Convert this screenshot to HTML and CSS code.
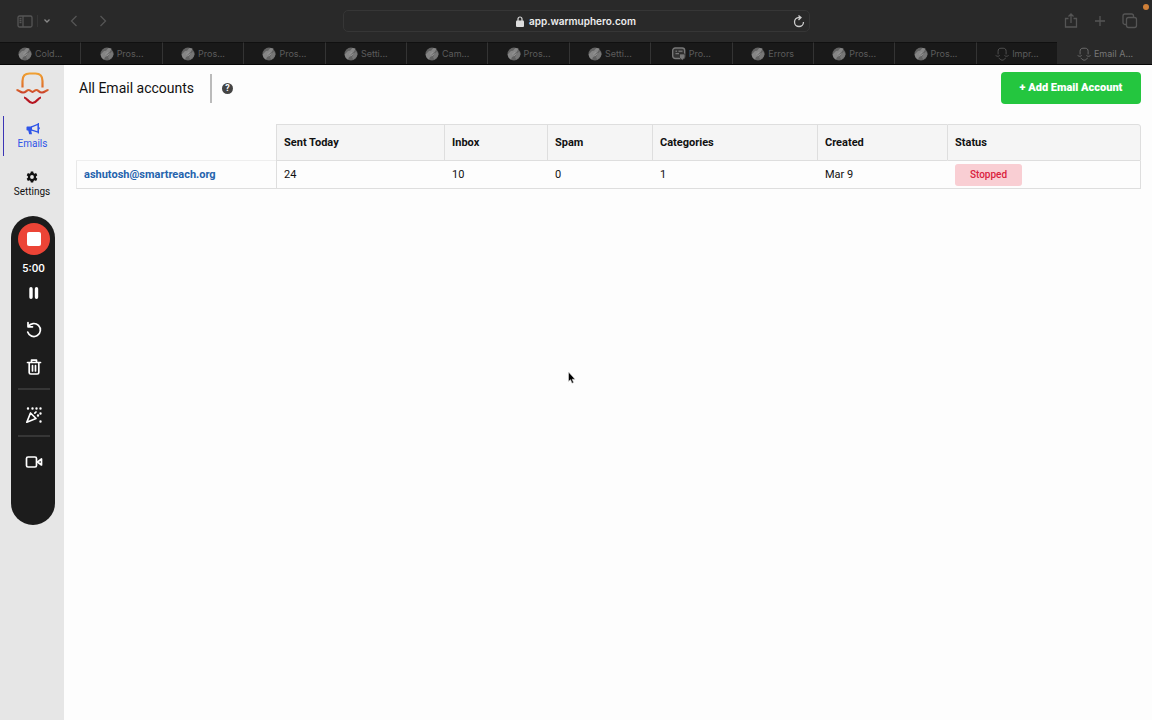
FILE: index.html
```html
<!DOCTYPE html>
<html lang="en">
<head>
<meta charset="utf-8">
<title>Email Accounts</title>
<link rel="stylesheet" href="styles.css">
</head>
<body>
<svg width="0" height="0" class="sprite" aria-hidden="true">
  <symbol id="globe" viewBox="0 0 14 14">
    <circle cx="7" cy="7" r="6.500" fill="#626262"/>
    <path d="M.6 7.500 4 4l2-.3L8.500 1l3 .6L10 4.500 8 7 6.500 9.500 5 10l-1 2.800L1.500 10.500z" fill="#858585"/>
    <path d="M9 7.500l3-3 1.500 2.500-1 3-3 2.500-1.500-2z" fill="#777"/>
    <path d="M5 7.500l3-2.500M7 9l2.500-2.500" stroke="#999" stroke-width=".8"/>
  </symbol>
  <symbol id="hero" viewBox="0 0 34 34">
    <path d="M7.500 18v-7.500c0-5 2.500-7.500 7-7.500h5.500c4.500 0 7 2.500 7 7.500V18M1.500 20.500c3.500 2.500 7 3 10 0M33 20.500c-3.500 2.500-7 3-10 0M9 27c3 1 4 5 8.500 5s5.500-4 8.500-5" fill="none" stroke="currentColor" stroke-width="2"/>
  </symbol>
</svg>

<header class="browser">
  <div class="toolbar">
    <div class="tools">
      <button class="tool" aria-label="Sidebar"><svg width="16" height="13" viewBox="0 0 16 13"><rect x="1" y="1" width="14" height="11" rx="1.500"/><path d="M6 1v11M2.500 3.500h2M2.500 5.500h2M2.500 7.500h2"/></svg></button>
      <span class="tool-line"></span>
      <button class="tool chevron" aria-label="Tab groups"><svg width="8" height="6" viewBox="0 0 8 6"><path d="m1.500 1.500 2.500 2.500 2.500-2.500"/></svg></button>
      <button class="tool back" aria-label="Back"><svg width="8" height="12" viewBox="0 0 8 12"><path d="M6.500 1 1.500 6l5 5"/></svg></button>
      <button class="tool forward" aria-label="Forward"><svg width="8" height="12" viewBox="0 0 8 12"><path d="m1.500 1 5 5-5 5"/></svg></button>
    </div>
    <div class="address">
      <span class="url"><svg width="8" height="11" viewBox="0 0 8 11"><rect y="4.500" width="8" height="6.500" rx="1" fill="#ddd"/><path d="M2 5V3a2 2 0 0 1 4 0v2" fill="none" stroke="#ddd" stroke-width="1.200"/></svg>app.warmuphero.com</span>
      <button class="tool reload" aria-label="Reload"><svg width="12" height="13" viewBox="0 0 12 13"><path d="M6 2.500A4.500 4.500 0 1 0 10.500 7M6 2.500h1.500M5.500.5l2.500 2-2.500 2.500"/></svg></button>
    </div>
    <div class="tools tools-right">
      <button class="tool" aria-label="Share"><svg width="14" height="16" viewBox="0 0 14 16"><path d="M4.500 5.500H1.500v8.500h11V5.500h-3M7 10V1M4.500 3.500 7 1l2.500 2.500"/></svg></button>
      <button class="tool" aria-label="New tab"><svg width="12" height="12" viewBox="0 0 12 12"><path d="M6 1v10M1 6h10"/></svg></button>
      <button class="tool" aria-label="Show tabs"><svg width="16" height="16" viewBox="0 0 16 16"><rect x="4.500" y="4.500" width="10" height="10" rx="2"/><path d="M4.500 11.500H3a2 2 0 0 1-2-2V3a2 2 0 0 1 2-2h6.500a2 2 0 0 1 2 2v1.500"/></svg></button>
    </div>
    <span class="mic-dot"></span>
  </div>
  <nav class="tabs" aria-label="Browser tabs">
    <button class="tab"><svg class="fav"><use href="#globe"/></svg>Cold...</button>
    <button class="tab"><svg class="fav"><use href="#globe"/></svg>Pros...</button>
    <button class="tab"><svg class="fav"><use href="#globe"/></svg>Pros...</button>
    <button class="tab"><svg class="fav"><use href="#globe"/></svg>Pros...</button>
    <button class="tab"><svg class="fav"><use href="#globe"/></svg>Setti...</button>
    <button class="tab"><svg class="fav"><use href="#globe"/></svg>Cam...</button>
    <button class="tab"><svg class="fav"><use href="#globe"/></svg>Pros...</button>
    <button class="tab"><svg class="fav"><use href="#globe"/></svg>Setti...</button>
    <button class="tab"><svg class="fav" viewBox="0 0 14 14"><rect x=".7" y="1" width="12" height="10.500" rx="2.500" fill="#333" stroke="#777" stroke-width="1.400"/><path d="M3.500 4.200h1.500M6.500 4.200h4M3.500 6.700h3.500" stroke="#888"/><path d="M7.500 7h5.500v3.500l-2.700 2.700-2.800-2.700z" fill="#777" stroke="#222" stroke-width=".6"/></svg>Pro...</button>
    <button class="tab"><svg class="fav"><use href="#globe"/></svg>Errors</button>
    <button class="tab"><svg class="fav"><use href="#globe"/></svg>Pros...</button>
    <button class="tab"><svg class="fav"><use href="#globe"/></svg>Pros...</button>
    <button class="tab"><svg class="fav"><use href="#hero"/></svg>Impr...</button>
    <button class="tab active"><svg class="fav"><use href="#hero"/></svg>Email A...</button>
  </nav>
</header>

<div class="app">
  <aside class="sidebar">
    <svg class="logo" viewBox="0 0 34 34" role="img" aria-label="WarmupHero">
      <defs><linearGradient id="flame" gradientUnits="userSpaceOnUse" x1="0" y1="2" x2="0" y2="33"><stop offset="0" stop-color="#f0a132"/><stop offset=".55" stop-color="#d9622b"/><stop offset=".72" stop-color="#b92028"/><stop offset="1" stop-color="#b5121f"/></linearGradient></defs>
      <path d="M7.500 16.500V10c0-5 2.500-7.500 7-7.500H20.500c4.500 0 7 2.500 7 7.500v6.500M1.500 19c2.500 0 3.500 2.500 6.500 2.500s3.500-2.500 5.500-2.500 2.500 1.800 4 1.800 2-1.800 4-1.800 2.500 2.500 5.500 2.500 4-2.500 6.500-2.500M9 26.500c3 0 4 5.500 8.500 5.500s5.500-5.500 8.500-5.500" fill="none" stroke="url(#flame)" stroke-width="2.200"/>
    </svg>
    <a class="nav-item current" href="#emails">
      <svg width="14" height="12" viewBox="0 0 14 12"><path d="M5 4.200 12.200 1.200v8L5 6.800" fill="none" stroke="currentColor" stroke-width="1.300"/><path d="M1.200 3.500H6v4H5.200l.8 3.700H3.200l-1-3.700h-1Q.5 7.500.5 6.800V4.200q0-.7.700-.7zM11.800 0h1.200v4l.8.700v1l-.8.700v4h-1.200z" fill="currentColor"/></svg>
      Emails
    </a>
    <a class="nav-item" href="#settings">
      <svg width="12" height="12" viewBox="0 0 12 12"><path fill="currentColor" fill-rule="evenodd" d="M4.800.5h2.400l.3 1.600 1 .6 1.600-.6 1.200 2.100L10 5.400v1.200l1.300 1.200-1.200 2.100-1.600-.6-1 .6-.3 1.600H4.800l-.3-1.600-1-.6-1.600.6L.7 7.800 2 6.600V5.400L.7 4.200l1.200-2.100 1.600.6 1-.6zM6 4.100a1.900 1.900 0 1 0 0 3.800 1.900 1.900 0 0 0 0-3.800z"/></svg>
      Settings
    </a>
    <div class="recorder">
      <button class="stop" aria-label="Stop recording"><span></span></button>
      <span class="time">5:00</span>
      <button class="rec" aria-label="Pause"><svg width="18" height="18" viewBox="0 0 18 18"><path d="M6 4.800v8.400M11.500 4.800v8.400" stroke-width="3.400"/></svg></button>
      <button class="rec" aria-label="Restart"><svg width="18" height="18" viewBox="0 0 18 18"><path d="M3.300 5.700A6.500 6.500 0 1 1 2.700 11M3 1.500v4.300h4.500"/></svg></button>
      <button class="rec" aria-label="Delete"><svg width="18" height="18" viewBox="0 0 18 18"><path d="M2.500 4.500h13M6.500 4V2.200h5V4M4.200 5v9.500a1.500 1.500 0 0 0 1.500 1.500h6.600a1.500 1.500 0 0 0 1.500-1.500V5M7.500 7.500v5.500M10.500 7.500v5.500"/></svg></button>
      <hr>
      <button class="rec" aria-label="Confetti"><svg width="18" height="18" viewBox="0 0 18 18"><path d="M5.500 7 1.800 16.200 11 12.500zM9.800 7.200l1.200-1.200"/><path d="M3 2.500h.01M7.500 2.500h.01M11.500 2.500h.01M15.500 2.500h.01M15.500 7.500h.01M13 9.500h.01M15.500 15.500h.01" stroke-width="2.400"/></svg></button>
      <hr>
      <button class="rec" aria-label="Camera"><svg width="18" height="18" viewBox="0 0 18 18"><rect x="1.500" y="4" width="10" height="10" rx="1.500"/><path d="m12.500 9 4-3v6z"/></svg></button>
    </div>
  </aside>

  <main class="content">
    <div class="page-head">
      <h1>All Email accounts</h1>
      <span class="rule"></span>
      <button class="help" aria-label="Help">?</button>
      <button class="add">+ Add Email Account</button>
    </div>
    <table class="accounts">
      <colgroup><col class="c-mail"><col class="c-sent"><col class="c-inbox"><col class="c-spam"><col class="c-cat"><col class="c-created"><col></colgroup>
      <thead>
        <tr><td></td><th scope="col">Sent Today</th><th scope="col">Inbox</th><th scope="col">Spam</th><th scope="col">Categories</th><th scope="col">Created</th><th scope="col">Status</th></tr>
      </thead>
      <tbody>
        <tr><th scope="row"><a href="#account">ashutosh@smartreach.org</a></th><td>24</td><td>10</td><td>0</td><td>1</td><td>Mar 9</td><td><span class="status">Stopped</span></td></tr>
      </tbody>
    </table>
  </main>
</div>
<svg class="cursor" width="10" height="14" viewBox="0 0 10 14"><path d="M1.500 1v9.500l2-1.800 1.500 3.600 1.600-.7-1.400-3.400h2.900z" fill="#000" stroke="#ddd" stroke-width=".6"/></svg>
</body>
</html>
```
FILE: styles.css
```css
* { box-sizing: border-box; }

body {
  margin: 0;
  min-height: 100vh;
  display: flex;
  flex-direction: column;
  background: #fdfdfd;
  color: #111;
  font: 12px/16px Roboto, sans-serif;
}

button {
  padding: 0;
  border: 0;
  background: none;
  color: inherit;
  font: inherit;
}

svg { flex: none; }
.sprite { position: absolute; }

/* Browser window */
.browser {
  background: #292929;
  border-bottom: 1px solid #050505;
  font-family: Inter, sans-serif;
}

.toolbar {
  position: relative;
  height: 42px;
  display: grid;
  grid-template-columns: 1fr 467px 1fr;
  align-items: center;
}

.tools {
  display: flex;
  align-items: center;
  padding-left: 17px;
}

.tools-right {
  justify-content: flex-end;
  gap: 16px;
  padding: 0 14px 0 0;
}

.tool {
  display: flex;
  color: #555;
}

.tool svg {
  fill: none;
  stroke: currentColor;
  stroke-width: 1.3;
}

.tool-line {
  width: 1px;
  height: 12px;
  margin: 0 5px 0 4px;
  background: #363636;
}

.chevron { color: #888; }
.back { margin-left: 19px; }
.forward { margin-left: 21px; }

.address {
  height: 22px;
  display: flex;
  align-items: center;
  border: 1px solid #363636;
  border-radius: 5px;
  padding-right: 4px;
}

.url {
  flex: 1;
  display: flex;
  justify-content: center;
  align-items: center;
  gap: 5px;
  padding-left: 16px;
  color: #eee;
  font-size: 10px;
  font-weight: 600;
}

.reload { color: #ccc; }

.mic-dot {
  position: absolute;
  top: 4px;
  right: 3px;
  width: 6px;
  height: 6px;
  border-radius: 50%;
  background: #d08038;
}

.tabs {
  display: flex;
  height: 22px;
}

.tab {
  flex: 1;
  min-width: 0;
  display: flex;
  align-items: center;
  justify-content: center;
  gap: 3px;
  border-top: 1px solid #101010;
  border-left: 1px solid #343434;
  background: #191919;
  color: #5c5c5c;
  font-size: 9px;
  white-space: nowrap;
}

.tab:first-child { border-left: 0; }

.tab.active {
  flex: 0 0 95px;
  border-color: #292929;
  background: #292929;
  color: #777;
}

.fav {
  width: 14px;
  height: 14px;
}

/* Application */
.app {
  flex: 1;
  display: flex;
}

.sidebar {
  flex: 0 0 64px;
  display: flex;
  flex-direction: column;
  align-items: center;
  background: #e6e6e6;
}

.logo {
  width: 34px;
  height: 34px;
  margin: 6px 0 11px;
}

.nav-item {
  width: 58px;
  height: 40px;
  display: flex;
  flex-direction: column;
  align-items: center;
  justify-content: center;
  gap: 2px;
  margin-bottom: 8px;
  padding-top: 2px;
  color: #111;
  font-size: 10px;
  line-height: 14px;
  text-decoration: none;
}

.nav-item.current {
  border-left: 1px solid #3b35b5;
  color: #2f55e8;
}

.recorder {
  width: 44px;
  height: 309px;
  display: flex;
  flex-direction: column;
  align-items: center;
  margin: 4px 0 0 2px;
  padding: 7px 0 0 1px;
  border-radius: 22px;
  background: #1c1c1c;
  color: #fff;
}

.stop {
  width: 32px;
  height: 32px;
  display: flex;
  align-items: center;
  justify-content: center;
  border-radius: 50%;
  background: #ec4436;
}

.stop span {
  width: 14px;
  height: 14px;
  border-radius: 2px;
  background: #fff;
}

.time {
  margin: 5px 0 8px;
  font: 600 10px/16px Inter, sans-serif;
}

.rec {
  display: flex;
  margin-bottom: 19px;
}

.rec svg {
  fill: none;
  stroke: #fff;
  stroke-width: 1.7;
  stroke-linecap: round;
  stroke-linejoin: round;
}

.recorder hr {
  width: 32px;
  height: 2px;
  margin: -7px 0 16px;
  border: 0;
  background: #363636;
}

.recorder hr + .rec { margin-bottom: 18px; }

.content {
  flex: 1;
  min-width: 0;
  padding: 7px 11px 0 12px;
}

.page-head {
  display: flex;
  align-items: center;
  height: 32px;
  margin-bottom: 20px;
  padding-left: 3px;
}

h1 {
  margin: 0;
  font-size: 14px;
  line-height: 20px;
  font-weight: 400;
}

.rule {
  width: 2px;
  height: 29px;
  margin: 0 10px 0 16px;
  background: #bbb;
}

.help {
  width: 11px;
  height: 11px;
  border-radius: 50%;
  background: #444;
  color: #fff;
  font-size: 9px;
  line-height: 11px;
  font-weight: 700;
}

.add {
  width: 140px;
  height: 32px;
  margin-left: auto;
  border-radius: 4px;
  background: #24c63f;
  color: #fff;
  font-size: 11px;
  font-weight: 900;
}

.accounts {
  width: 100%;
  table-layout: fixed;
  border-spacing: 0;
}

.c-mail { width: 200px; }
.c-sent { width: 168px; }
.c-inbox { width: 103px; }
.c-spam { width: 105px; }
.c-cat { width: 165px; }
.c-created { width: 130px; }

.accounts th,
.accounts td {
  height: 28px;
  padding: 0 8px;
  text-align: left;
}

.accounts th { padding: 0 7px; }

.accounts thead th {
  height: 37px;
  border: solid #dedede;
  border-width: 1px 0 1px 1px;
  background: #f5f5f5;
  font-size: 11px;
  font-weight: 700;
}

.accounts thead th:last-child {
  border-right-width: 1px;
  border-top-right-radius: 3px;
}

.accounts thead td { border-bottom: 1px solid #eee; }

.accounts tbody th,
.accounts tbody td {
  border-bottom: 1px solid #dedede;
  font-size: 11px;
}

.accounts tbody th { border-left: 1px solid #e8e8e8; }
.accounts tbody th + td { border-left: 1px solid #dedede; padding-left: 7px; }
.accounts tbody td:last-child { border-right: 1px solid #dedede; }

.accounts a {
  color: #2563ad;
  font-weight: 700;
  text-decoration: none;
}

.status {
  display: block;
  width: 67px;
  height: 22px;
  border-radius: 3px;
  background: #f9ced3;
  color: #d9223d;
  font-size: 10px;
  line-height: 22px;
  font-weight: 500;
  text-align: center;
}

.cursor {
  position: absolute;
  left: 567px;
  top: 371px;
}
```
